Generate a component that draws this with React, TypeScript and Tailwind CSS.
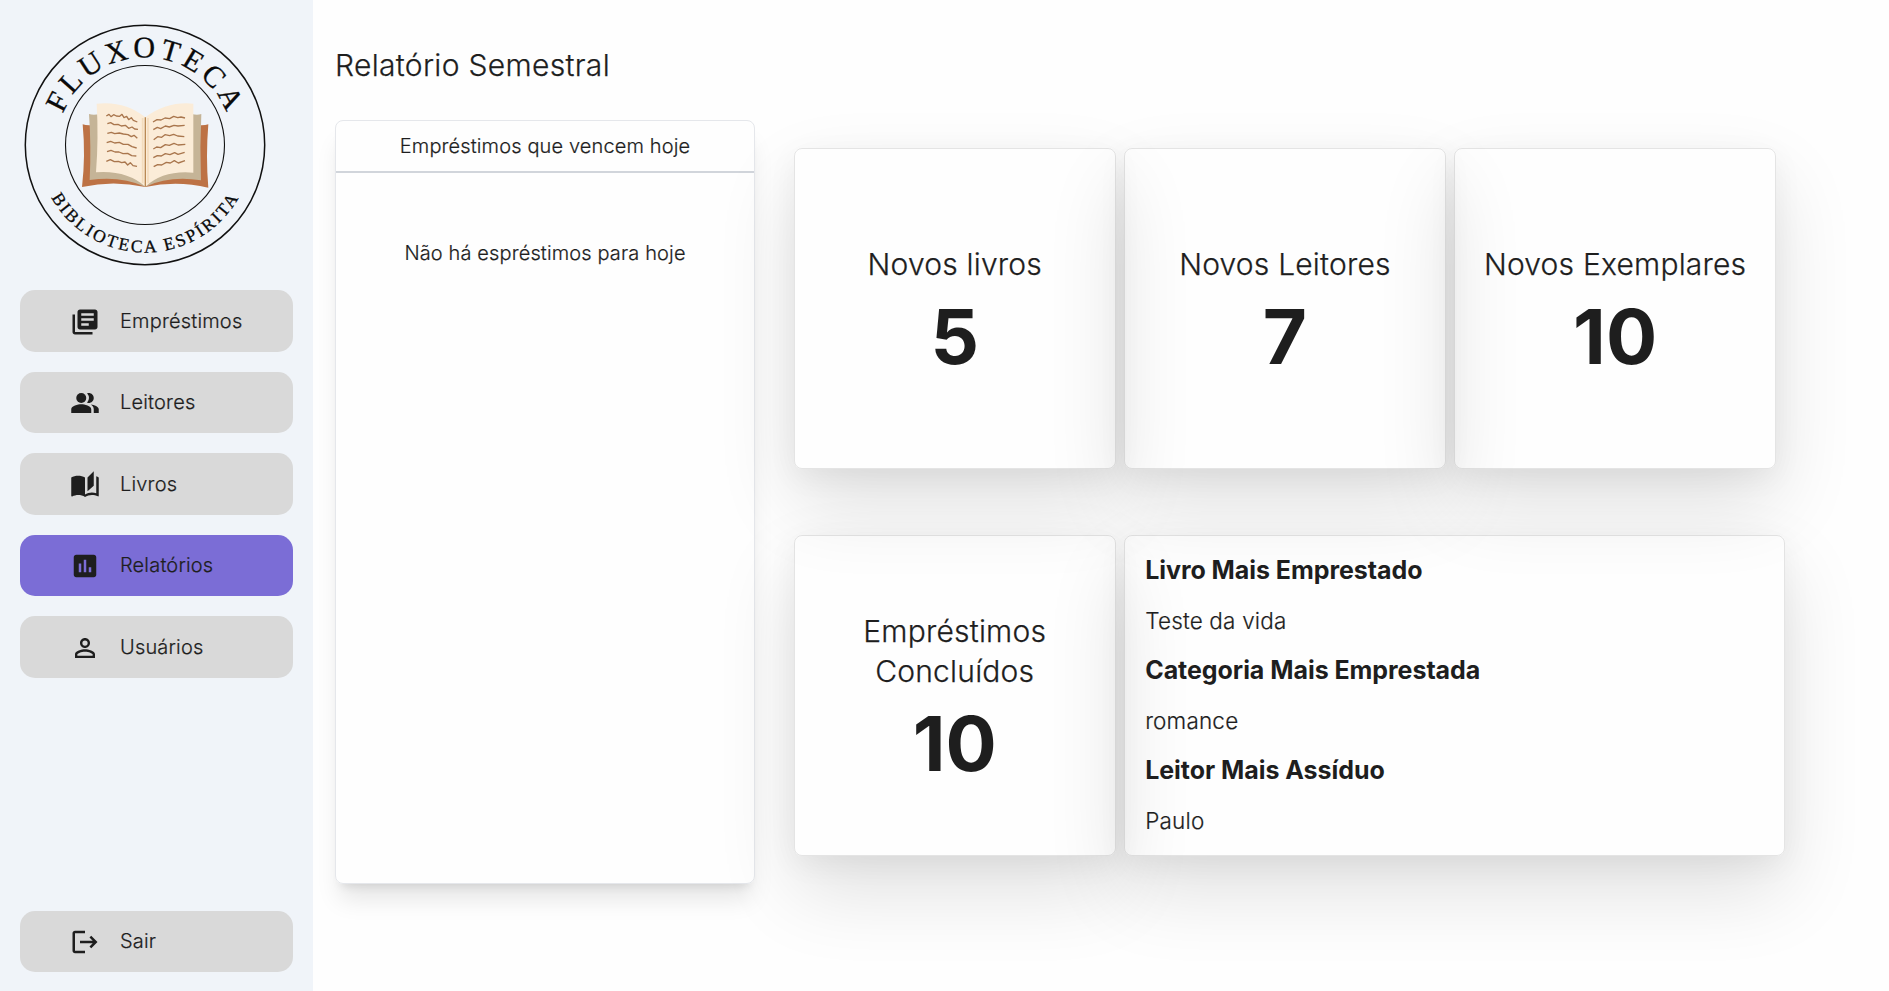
import type { ReactNode } from "react";
import type { IconType } from "react-icons";
import {
  MdAssessment,
  MdAutoStories,
  MdLibraryBooks,
  MdLogout,
  MdPeopleAlt,
  MdPersonOutline,
} from "react-icons/md";

const LEFT_LINES = [
  "M319 348l8-5 6 7 8-6 8 4 10 1 7-6 6 10 8-4 6 10 8-6 6 8 12 5",
  "M322 371l10-3 10 6 12-1 10 5 12-2 10 9 10-4 8 6 10 1",
  "M322 400l12-3 10 4 14-2 12 3 14 2 10 6 8-4 10 9",
  "M320 428l12-4 12 5 14-2 12 6 14 0 12 7 14 4",
  "M321 455l12-4 12 5 12 0 12 5 14-1 12 7 14 1",
  "M319 484l12-5 12 6 12-1 10 4 10-2 8 9 8-7 8 9 12 2",
];
const RIGHT_LINES = [
  "M459 366l12-7 12 1 12-6 14 2 12-7 12 4 10-2 12 3",
  "M460 389l12-7 10 4 14-8 12 3 14-5 12 2 20-2",
  "M461 419l12-9 12 2 10-8 14 3 12-4 12 5 20 2",
  "M460 447l10-6 12 2 14-9 12 2 14-6 12 5 22-2",
  "M460 473l12-6 12 1 12-7 14 3 14-6 10 5 20-6",
  "M461 500l12-6 12 1 14-8 12 2 12-7 12 7 20-7",
];

function Logo() {
  return (
    <svg viewBox="0 0 290 290" className="block h-[290px] w-[290px]" aria-label="Fluxoteca">
      <defs>
        <path id="arc-top" d="M57.5 145A87.5 87.5 0 1 1 232.5 145" />
        <path id="arc-bottom" d="M37.5 145A107.5 107.5 0 0 0 252.5 145" />
      </defs>
      <circle cx="145" cy="145" r="119.7" fill="none" stroke="#111" strokeWidth="1.5" />
      <circle cx="145" cy="145" r="79.5" fill="none" stroke="#111" strokeWidth="1.1" />
      <g fill="#0a0a0a" stroke="#0a0a0a" strokeWidth="0.3" fontFamily="'Liberation Serif', serif" textAnchor="middle">
        <text fontSize="30" letterSpacing="3.9">
          <textPath href="#arc-top" startOffset="50.4%">FLUXOTECA</textPath>
        </text>
        <text fontSize="17.6" letterSpacing="2.4">
          <textPath href="#arc-bottom" startOffset="50.2%">BIBLIOTECA ESPÍRITA</textPath>
        </text>
      </g>
      <g transform="scale(.33333)">
        <path d="M248 373Q262 378 290 374L436 548 582 374Q610 378 625 373Q617 468 625 563Q530 540 436 561Q340 540 246 561Q257 468 248 373z" fill="#bd7245" />
        <path d="M267 342Q280 346 300 342L436 545 575 342Q592 346 604 342Q599 440 603 541Q510 526 436 560Q360 526 269 540Q274 440 267 342z" fill="#c5b497" />
        <path d="M290 311Q375 302 436 352Q500 304 580 311V518Q490 510 436 560Q380 510 288 517Q296 415 290 311z" fill="#fbecd8" />
        <path d="M428 354V550M444 354V550" stroke="#f3dcbd" strokeWidth="5" />
        <path d="M436 352V560" stroke="#b98a55" strokeWidth="4" />
        <g fill="none" stroke="#a9764d" strokeWidth="4" strokeLinejoin="round">
          {LEFT_LINES.map((d) => <path key={d} d={d} />)}
          {RIGHT_LINES.map((d) => <path key={d} d={d} />)}
        </g>
      </g>
    </svg>
  );
}

function NavButton({ icon: Icon, label, active = false }: { icon: IconType; label: string; active?: boolean }) {
  return (
    <button
      className={`flex h-[61.5px] w-[273px] shrink-0 items-center rounded-[15px] pl-[50px] text-left ${
        active ? "bg-[#7b6dd6]" : "bg-[#d9d9d9]"
      }`}
    >
      <Icon className="mt-0.5 size-[30px]" />
      <span className="ml-5 text-[20px] font-light tracking-[0.18px] [-webkit-text-stroke:0.2px]">{label}</span>
    </button>
  );
}

function Card({ className, children }: { className: string; children: ReactNode }) {
  return (
    <div
      className={`h-[321px] rounded-lg border border-black/10 shadow-[0_35px_80px_rgba(0,0,0,0.12),0_8px_30px_rgba(0,0,0,0.05)] ${className}`}
    >
      {children}
    </div>
  );
}

function Stat({ title, value }: { title: string; value: number }) {
  return (
    <Card className="flex w-[321.5px] flex-col items-center justify-center gap-[15px] px-5 text-center">
      <h2 className="text-[30px] leading-10 font-light tracking-[0.2px] [-webkit-text-stroke:0.25px]">{title}</h2>
      <p className="text-[76px] leading-[75px] font-bold">{value}</p>
    </Card>
  );
}

const HIGHLIGHTS = [
  ["Livro Mais Emprestado", "Teste da vida"],
  ["Categoria Mais Emprestada", "romance"],
  ["Leitor Mais Assíduo", "Paulo"],
];

export default function App() {
  return (
    <div className="flex h-[991px] overflow-hidden bg-[#fefefe] font-['Inter',sans-serif] text-[#1e1e1e]">
      <aside className="z-10 flex w-[313px] shrink-0 flex-col bg-[#f0f4f9] pb-[19px]">
        <Logo />
        <nav className="flex flex-col gap-5 pl-5">
          <NavButton icon={MdLibraryBooks} label="Empréstimos" />
          <NavButton icon={MdPeopleAlt} label="Leitores" />
          <NavButton icon={MdAutoStories} label="Livros" />
          <NavButton icon={MdAssessment} label="Relatórios" active />
          <NavButton icon={MdPersonOutline} label="Usuários" />
        </nav>
        <div className="mt-auto pl-5">
          <NavButton icon={MdLogout} label="Sair" />
        </div>
      </aside>
      <main className="flex flex-1 flex-col pl-[22px]">
        <h1 className="mt-[45px] text-[30px] leading-10 font-light tracking-[0.32px] [-webkit-text-stroke:0.25px]">
          Relatório Semestral
        </h1>
        <div className="mt-[35px] flex">
          <section className="h-[764px] w-[420px] shrink-0 rounded-lg border border-gray-200 text-center text-[20px] font-light tracking-[0.13px] shadow-xl [-webkit-text-stroke:0.2px]">
            <h2 className="h-[52px] border-b-2 border-[#d1d5db] leading-[50px]">Empréstimos que vencem hoje</h2>
            <p className="mt-[65px] leading-[30px]">Não há espréstimos para hoje</p>
          </section>
          <section className="mt-7 ml-[39px] flex flex-col gap-[66px]">
            <div className="flex gap-[8.7px]">
              <Stat title="Novos livros" value={5} />
              <Stat title="Novos Leitores" value={7} />
              <Stat title="Novos Exemplares" value={10} />
            </div>
            <div className="flex gap-[8.7px]">
              <Stat title="Empréstimos Concluídos" value={10} />
              <Card className="w-[661px] px-5 pt-[9px]">
                <dl>
                  {HIGHLIGHTS.map(([title, value]) => (
                    <div key={title}>
                      <dt className="text-[25px] leading-[50px] font-bold tracking-[-0.05px]">{title}</dt>
                      <dd className="pt-px text-[22.5px] leading-[49px] font-light tracking-[0.18px] [-webkit-text-stroke:0.2px]">
                        {value}
                      </dd>
                    </div>
                  ))}
                </dl>
              </Card>
            </div>
          </section>
        </div>
      </main>
    </div>
  );
}
